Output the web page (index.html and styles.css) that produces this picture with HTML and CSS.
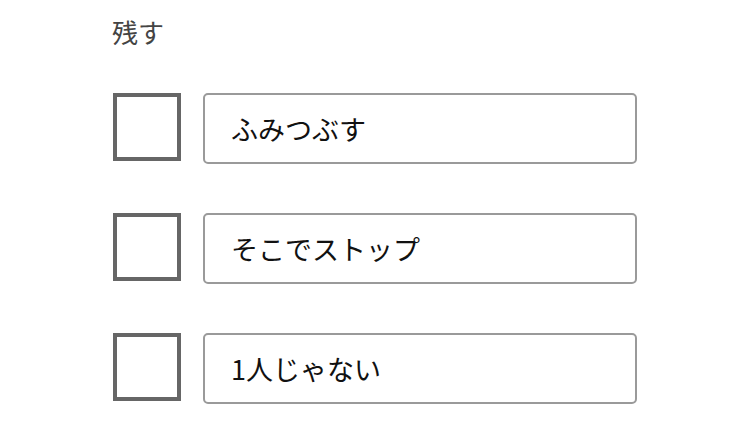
FILE: index.html
```html
<!DOCTYPE html>
<html>
<head>
    <title>残す</title>
    <link rel="stylesheet" href="styles.css">
</head>
<body>
    <div class="panel">
        <div class="label">残す</div>

        <div class="row">
            <input type="checkbox" class="check">
            <input type="text" class="field" value="ふみつぶす">
        </div>

        <div class="row">
            <input type="checkbox" class="check">
            <input type="text" class="field" value="そこでストップ">
        </div>

        <div class="row">
            <input type="checkbox" class="check">
            <input type="text" class="field" value="1人じゃない">
        </div>
    </div>
</body>
</html>
```

FILE: styles.css
```css
body {
    font-family: "Noto Sans CJK JP", "Noto Sans", sans-serif;
    margin: 0;
    padding: 0;
    background-color: #ffffff;
}
.panel {
    padding: 14px 0 0 112px;
    display: flex;
    flex-direction: column;
    gap: 49px;
}
.label {
    font-size: 26px;
    line-height: 36px;
    color: #444444;
    margin-bottom: -6px;
}
.row {
    display: flex;
    align-items: flex-start;
    gap: 22px;
    padding-left: 1px;
}
.check {
    appearance: none;
    -webkit-appearance: none;
    margin: 0;
    width: 68px;
    height: 68px;
    border: 4px solid #666666;
    background: white;
    box-sizing: border-box;
}
.field {
    margin: 0;
    width: 434px;
    height: 71px;
    box-sizing: border-box;
    border: 2px solid #9a9a9a;
    border-radius: 5px;
    padding: 0 0 0 26px;
    font-family: inherit;
    font-size: 27px;
    color: #111111;
    outline: none;
}
```
